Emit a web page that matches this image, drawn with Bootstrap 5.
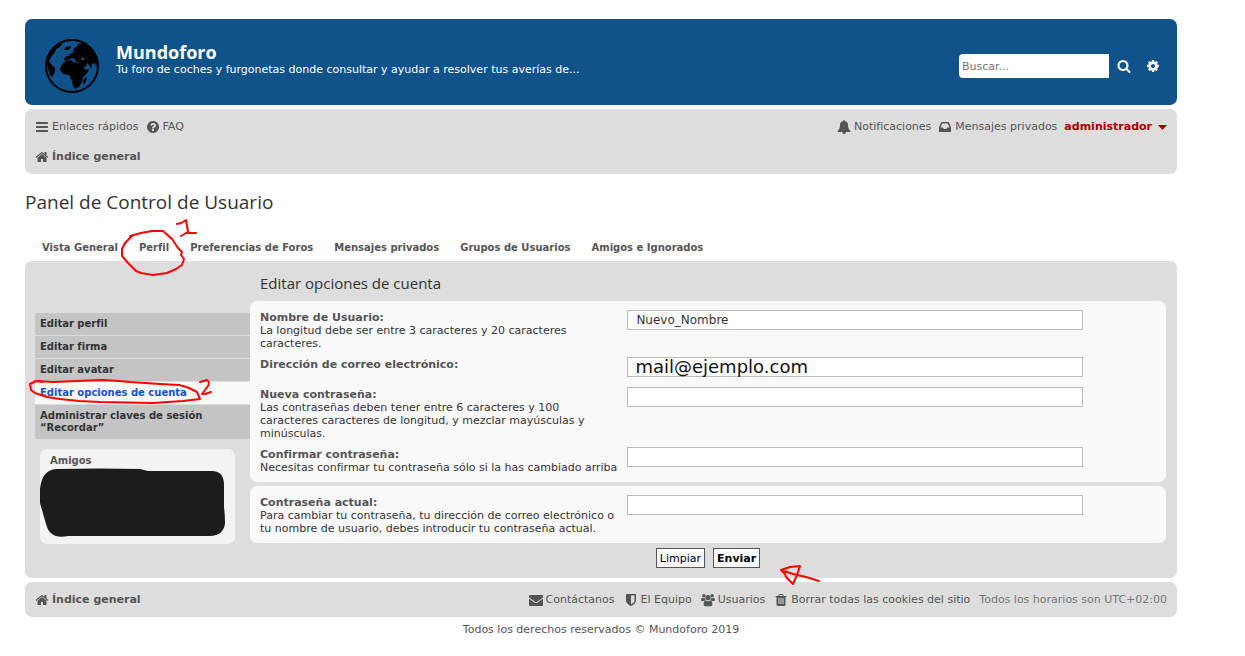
<!DOCTYPE html>
<html lang="es">
<head>
<meta charset="utf-8">
<meta name="viewport" content="width=device-width, initial-scale=1">
<title>Mundoforo - Panel de Control de Usuario</title>
<link href="https://cdn.jsdelivr.net/npm/bootstrap@5.3.0/dist/css/bootstrap.min.css" rel="stylesheet">
<style>
body{font-family:"DejaVu Sans",Verdana,sans-serif;font-size:11px;line-height:13px;color:#333;background:#fff}
.wrap{max-width:1202px;padding:19px 25px 0}
a{color:#555;text-decoration:none}
a:hover{color:#105289}
h1,h2,h3{font-family:"Open Sans","Trebuchet MS",sans-serif;margin:0}
.ic{width:14px;height:14px;fill:currentColor;flex:none}
.headerbar{background:#10528a;color:#fff;border-radius:7px;min-height:86px;padding:0 10px 0 20px;margin-bottom:4px}
.headerbar h1{font-size:18px;line-height:22px;font-weight:700}
.brand{gap:17px}
.globe{width:54px;height:54px;display:block;margin-top:8px}
.greybar{background:#ddd;border-radius:7px;padding:11px 10px 10px;margin-bottom:4px;line-height:14px}
.greybar ul{margin:0}
.greybar a{display:flex;align-items:center;gap:3px}
.nav-links{gap:7px}
.foot-links{gap:9px}
.search-input{width:150px;height:24px;border:0;border-radius:4px 0 0 4px;padding:3px;font-size:11px;color:#333}
.search-input::placeholder{color:#757575}
.icon-btn{border:0;background:none;color:#fff;padding:0;width:29px;height:24px;display:flex;align-items:center;justify-content:center}
.crumb{font-weight:700}
.greybar .user{font-weight:700;color:#a00;gap:6px}
.caret-ic{width:9px;height:5px;fill:currentColor}
.page-title{font-size:19px;line-height:24px;font-weight:400;color:#333;margin:16px 0 27px}
.tabs{padding-left:17px;gap:21px;height:15px;margin-bottom:5px}
.tabs a{font-size:10px;font-weight:700}
.marker{position:absolute;fill:none;stroke:#f00;stroke-width:2;stroke-linecap:round;stroke-linejoin:round;pointer-events:none;z-index:2;overflow:visible}
.mark-tab{left:-18px;top:-24px}
.mark-side{left:-6px;top:-2px}
.mark-send{left:124px;top:18px}
.panel{background:#ddd;border-radius:7px;padding:10px 11px 10px 10px;margin-bottom:4px}
.side{width:215px;flex:none;padding-top:42px}
.side-menu a{display:block;background:#c4c4c4;color:#333;font-size:10px;font-weight:700;line-height:12px;padding:5px;margin-bottom:1px}
.side-menu a.active{background:#f9f9f9;color:#1550d0}
.friends{background:#f3f3f3;border-radius:7px;margin:10px 15px 0 5px;height:95px;padding:6px 10px}
.friends h3{font:700 10px/12px "DejaVu Sans",Verdana,sans-serif;color:#555}
.scribble{left:0;top:20px;fill:#1c1c1c;stroke:none}
.main-title{font-size:15px;line-height:18px;font-weight:400;color:#333;margin:3px 0 9px 10px}
.box{background:#f9f9f9;border-radius:7px;padding:10px 10px 0;margin-bottom:4px}
.frow{display:grid;grid-template-columns:40% 1fr;column-gap:9px;min-height:22px;margin-bottom:8px}
.frow label{font-weight:700;color:#555;display:block}
.frow input{width:100%;max-width:456px;height:20px;border:1px solid #bbb;background:#fff;padding:0 8px;margin-top:-1px;font-size:12px;line-height:18px;color:#333}
.frow input.big-mail{font-size:18px;line-height:20px;color:#111;border:0;box-shadow:inset 0 0 0 1px #bbb}
.actions{padding-top:1px}
.fbtn{height:20px;border:1px solid #555;background:#fafafa;color:#000;font-size:11px;line-height:13px;padding:0 3px}
.copy{color:#555;padding-top:2px}
.tz{color:#777}
</style>
</head>
<body>
<svg class="d-none">
<symbol id="bars" viewBox="0 0 1792 1792"><path d="M1664 1344v128q0 26-19 45t-45 19h-1408q-26 0-45-19t-19-45v-128q0-26 19-45t45-19h1408q26 0 45 19t19 45zm0-512v128q0 26-19 45t-45 19h-1408q-26 0-45-19t-19-45v-128q0-26 19-45t45-19h1408q26 0 45 19t19 45zm0-512v128q0 26-19 45t-45 19h-1408q-26 0-45-19t-19-45v-128q0-26 19-45t45-19h1408q26 0 45 19t19 45z"/></symbol>
<symbol id="home" viewBox="0 0 1792 1792"><path d="M1472 992v480q0 26-19 45t-45 19h-384v-384h-256v384h-384q-26 0-45-19t-19-45v-480q0-1 .5-3t.5-3l575-474 575 474q1 2 1 6zm223-69l-62 74q-8 9-21 11h-3q-13 0-21-7l-692-577-692 577q-12 8-24 7-13-2-21-11l-62-74q-8-10-7-23.500t11-21.500l719-599q32-26 76-26t76 26l244 204v-195q0-14 9-23t23-9h192q14 0 23 9t9 23v408l219 182q10 8 11 21.500t-7 23.500z"/></symbol>
<symbol id="question" viewBox="0 0 1792 1792"><path d="M1024 1376v-192q0-14-9-23t-23-9h-192q-14 0-23 9t-9 23v192q0 14 9 23t23 9h192q14 0 23-9t9-23zm256-672q0-88-55.500-163t-138.500-116-170-41q-243 0-371 213-15 24 8 42l132 100q7 6 19 6 16 0 25-12 53-68 86-92 34-24 86-24 48 0 85.500 26t37.500 59q0 38-20 61t-68 45q-63 28-115.500 86.500t-52.500 125.500v36q0 14 9 23t23 9h192q14 0 23-9t9-23q0-19 21.500-49.500t54.500-49.500q32-18 49-28.500t46-35 44.500-48 28-60.500 12.500-81zm384 192q0 209-103 385.500t-279.500 279.500-385.500 103-385.500-103-279.500-279.500-103-385.500 103-385.500 279.500-279.500 385.500-103 385.500 103 279.500 279.500 103 385.500z"/></symbol>
<symbol id="search" viewBox="0 0 1792 1792"><path d="M1216 832q0-185-131.500-316.500t-316.500-131.500-316.500 131.500-131.500 316.500 131.500 316.500 316.500 131.500 316.500-131.500 131.500-316.500zm512 832q0 52-38 90t-90 38q-54 0-90-38l-343-342q-179 124-399 124-143 0-273.500-55.500t-225-150-150-225-55.500-273.500 55.500-273.500 150-225 225-150 273.500-55.500 273.500 55.500 225 150 150 225 55.500 273.500q0 220-124 399l343 343q37 37 37 90z"/></symbol>
<symbol id="cog" viewBox="0 0 1792 1792"><path d="M1152 896q0-106-75-181t-181-75-181 75-75 181 75 181 181 75 181-75 75-181zm512-109v222q0 12-8 23t-20 13l-185 28q-19 54-39 91 35 50 107 138 10 12 10 25t-9 23q-27 37-99 108t-94 71q-12 0-26-9l-138-108q-44 23-91 38-16 136-29 186-7 28-36 28h-222q-14 0-24.500-8.500t-11.500-21.500l-28-184q-49-16-90-37l-141 107q-10 9-25 9-14 0-25-11-126-114-165-168-7-10-7-23 0-12 8-23 15-21 51-66.500t54-70.500q-27-50-41-99l-183-27q-13-2-21-12.500t-8-23.500v-222q0-12 8-23t19-13l186-28q14-46 39-92-40-57-107-138-10-12-10-24 0-10 9-23 26-36 98.500-107.500t94.500-71.500q13 0 26 10l138 107q44-23 91-38 16-136 29-186 7-28 36-28h222q14 0 24.500 8.500t11.500 21.500l28 184q49 16 90 37l142-107q9-9 24-9 13 0 25 10 129 119 165 170 7 8 7 22 0 12-8 23-15 21-51 66.500t-54 70.500q26 50 41 98l183 28q13 2 21 12.500t8 23.500z"/></symbol>
<symbol id="bell" viewBox="0 0 1792 1792"><path d="M912 1696q0-16-16-16-59 0-101.500-42.500t-42.500-101.500q0-16-16-16t-16 16q0 73 51.500 124.500t124.500 51.500q16 0 16-16zm816-288q0 52-38 90t-90 38h-448q0 106-75 181t-181 75-181-75-75-181h-448q-52 0-90-38t-38-90q50-42 91-88t85-119.500 74.500-158.500 50-206 19.500-260q0-152 117-282.500t307-158.500q-8-19-8-39 0-40 28-68t68-28 68 28 28 68q0 20-8 39 190 28 307 158.500t117 282.500q0 139 19.500 260t50 206 74.500 158.500 85 119.500 91 88z"/></symbol>
<symbol id="inbox" viewBox="0 0 1792 1792"><path d="M1151 960h316q-1-3-2.500-8t-2.500-8l-212-496h-708l-212 496q-1 2-2.500 8t-2.500 8h316l95 192h320zm513 30v482q0 26-19 45t-45 19h-1408q-26 0-45-19t-19-45v-482q0-62 25-123l238-552q10-25 36.500-42t52.500-17h832q26 0 52.500 17t36.500 42l238 552q25 61 25 123z"/></symbol>
<symbol id="mail" viewBox="0 0 1792 1792"><path d="M1792 710v794q0 66-47 113t-113 47h-1472q-66 0-113-47t-47-113v-794q44 49 101 87 362 246 497 345 57 42 92.500 65.500t94.500 48 110 24.500h2q51 0 110-24.500t94.500-48 92.500-65.500q170-123 498-345 57-39 100-87zm0-294q0 79-49 151t-122 123q-376 261-468 325-10 7-42.500 31t-54 38.500-52 32.500-57.500 27-50 9h-2q-23 0-50-9t-57.500-27-52-32.500-54-38.500-42.500-31q-91-64-262-182.500t-205-142.500q-62-42-117-115.500t-55-136.500q0-78 41.500-130t118.500-52h1472q65 0 112.500 47t47.500 113z"/></symbol>
<symbol id="shield" viewBox="0 0 1792 1792"><path d="M1344 960v-640h-448v1137q119-63 213-137 235-184 235-360zm192-768v768q0 86-33.500 170.500t-83 150-118 127.500-126.500 103-121 77.500-89.500 49.500-42.500 20q-12 6-26 6t-26-6q-16-7-42.500-20t-89.500-49.500-121-77.500-126.500-103-118-127.500-83-150-33.500-170.500v-768q0-26 19-45t45-19h1152q26 0 45 19t19 45z"/></symbol>
<symbol id="group" viewBox="0 0 16 14"><circle cx="3.200" cy="2" r="2"/><circle cx="12.800" cy="2" r="2"/><circle cx="8" cy="4.200" r="3"/><path d="M0 7.300Q0 4.300 1.400 4.300Q3 5.400 4.500 4.600Q4.600 6.300 5.400 7.200Q4 7.200 3.300 8H1.300Q0 8 0 7.300zM16 7.300Q16 4.300 14.600 4.300Q13 5.400 11.500 4.600Q11.400 6.300 10.600 7.200Q12 7.200 12.700 8h2Q16 8 16 7.300zM3 12q0-4.300 2.400-4.300q2.600 1.600 5.200 0Q13 7.700 13 12q0 2-2 2H5q-2 0-2-2z"/></symbol>
<symbol id="trash" viewBox="0 0 1792 1792"><path d="M704 1376v-704q0-14-9-23t-23-9h-64q-14 0-23 9t-9 23v704q0 14 9 23t23 9h64q14 0 23-9t9-23zm256 0v-704q0-14-9-23t-23-9h-64q-14 0-23 9t-9 23v704q0 14 9 23t23 9h64q14 0 23-9t9-23zm256 0v-704q0-14-9-23t-23-9h-64q-14 0-23 9t-9 23v704q0 14 9 23t23 9h64q14 0 23-9t9-23zm-544-992h448l-48-117q-7-9-17-11h-317q-10 2-17 11zm928 32v64q0 14-9 23t-23 9h-96v948q0 83-47 143.500t-113 60.500h-832q-66 0-113-58.500t-47-141.500v-952h-96q-14 0-23-9t-9-23v-64q0-14 9-23t23-9h309l70-167q15-37 54-63t79-26h320q40 0 79 26t54 63l70 167h309q14 0 23 9t9 23z"/></symbol>
</svg>
<div class="wrap">
  <header class="headerbar d-flex align-items-center justify-content-between">
    <div class="brand d-flex align-items-center">
      <a href="#" aria-label="Mundoforo">
        <svg class="globe" viewBox="0 0 54 54">
          <circle cx="27" cy="27" r="26" fill="none" stroke="#000" stroke-width="2"/>
          <path d="M18 24l4-2 5-1 1 2 4 1 4-1 3 5 1 3 4-1-1 3-5 5-1 5-3 5-4 2-2-3-1-5-2-4-1-2-6-1-3-4 1-4zM19 21l1-3 3-1 2-2 3-1 1-2 4 0 2 2 3 1 1 3-2 0-1 3 4 0 2 4-2 3-3-3-3-2-3 0-1-3-3-1-2 1-2 1-2 1zM28 12l2-4 2 0 1-3 5-1 7 4 5 7 3 8-2 5-1-4-3 1-1 5-2-4-3-3-3-5-5-3-3 1zM19 11l2-3 5-1 0 2-3 2zM1 22l4-10 6-6 7-3-3 5-4 2-1 3-4 5-2 4 2 3 4 4 0 4-3 5-2-1zM38 42l3-4 1 1-2 5-2 2z"/>
        </svg>
      </a>
      <div class="mb-2">
        <h1>Mundoforo</h1>
        <div>Tu foro de coches y furgonetas donde consultar y ayudar a resolver tus averías de...</div>
      </div>
    </div>
    <form class="d-flex mt-2" role="search" onsubmit="return false">
      <input class="search-input" type="search" placeholder="Buscar..." aria-label="Buscar">
      <button class="icon-btn" aria-label="Buscar"><svg class="ic"><use href="#search"/></svg></button>
      <button class="icon-btn" type="button" aria-label="Búsqueda avanzada"><svg class="ic"><use href="#cog"/></svg></button>
    </form>
  </header>

  <nav class="greybar">
    <div class="d-flex justify-content-between pb-3">
      <ul class="nav-links list-unstyled d-flex">
        <li><a href="#"><svg class="ic"><use href="#bars"/></svg>Enlaces rápidos</a></li>
        <li><a href="#"><svg class="ic"><use href="#question"/></svg>FAQ</a></li>
      </ul>
      <ul class="nav-links list-unstyled d-flex">
        <li><a href="#"><svg class="ic"><use href="#bell"/></svg>Notificaciones</a></li>
        <li><a href="#"><svg class="ic"><use href="#inbox"/></svg>Mensajes privados</a></li>
        <li><a href="#" class="user">administrador<svg class="caret-ic" viewBox="0 0 9 5"><path d="M0 0h9L4.500 5z"/></svg></a></li>
      </ul>
    </div>
    <ul class="list-unstyled"><li><a href="#" class="crumb"><svg class="ic"><use href="#home"/></svg>Índice general</a></li></ul>
  </nav>

  <h2 class="page-title">Panel de Control de Usuario</h2>

  <ul class="tabs list-unstyled d-flex">
    <li><a href="#">Vista General</a></li>
    <li class="position-relative"><a href="#" aria-current="page">Perfil</a>
      <svg class="marker mark-tab" width="80" height="60"><path d="M9 19L20 16L31 14H42L51 22L57 31L61 35L60 38L63 42L61 48L55 52L46 56L32 58L20 56L15 54L8 47L1 39V32L4 26L12 18M56 7L60 6L65 3L67 15M60 19L65 16H75"/></svg>
    </li>
    <li><a href="#">Preferencias de Foros</a></li>
    <li><a href="#">Mensajes privados</a></li>
    <li><a href="#">Grupos de Usuarios</a></li>
    <li><a href="#">Amigos e Ignorados</a></li>
  </ul>

  <main class="panel d-flex">
    <aside class="side">
      <nav class="side-menu">
        <a href="#">Editar perfil</a>
        <a href="#">Editar firma</a>
        <a href="#">Editar avatar</a>
        <div class="position-relative">
          <a href="#" class="active">Editar opciones de cuenta</a>
          <svg class="marker mark-side" width="184" height="25"><path d="M13 2L7 1L1 4L2 10L6 13L18 17L31 19L50 21L71 22L124 23L154 21L171 19L168 12L160 8L154 6L150 5L131 4L101 2L90 1L74 0L48 1L24 2L8 1M171 2L178 0Q181 2 179 6L173 14H176L182 12"/></svg>
        </div>
        <a href="#">Administrar claves de sesión<br>“Recordar”</a>
      </nav>
      <section class="friends position-relative">
        <h3>Amigos</h3>
        <svg class="marker scribble" width="186" height="68"><path d="M16 0Q60-1 100 0L108 2H172Q184 2 184 16V38Q185 45 185 54Q184 66 171 67H28Q10 71 6 55L4 48L0 34V20Q2 1 16 0z"/></svg>
      </section>
    </aside>
    <form class="flex-grow-1" onsubmit="return false">
      <h2 class="main-title">Editar opciones de cuenta</h2>
      <div class="box">
        <div class="frow"><div><label for="user">Nombre de Usuario:</label>La longitud debe ser entre 3 caracteres y 20 caracteres caracteres.</div><div><input id="user" type="text" value="Nuevo_Nombre"></div></div>
        <div class="frow"><div><label for="email">Dirección de correo electrónico:</label></div><div><input id="email" class="big-mail" type="text" value="mail@ejemplo.com"></div></div>
        <div class="frow"><div><label for="newpw">Nueva contraseña:</label>Las contraseñas deben tener entre 6 caracteres y 100 caracteres caracteres de longitud, y mezclar mayúsculas y minúsculas.</div><div><input id="newpw" type="password"></div></div>
        <div class="frow mb-0 pb-2"><div><label for="confpw">Confirmar contraseña:</label>Necesitas confirmar tu contraseña sólo si la has cambiado arriba</div><div><input id="confpw" type="password"></div></div>
      </div>
      <div class="box">
        <div class="frow mb-0 pb-2"><div><label for="curpw">Contraseña actual:</label>Para cambiar tu contraseña, tu dirección de correo electrónico o tu nombre de usuario, debes introducir tu contraseña actual.</div><div><input id="curpw" type="password"></div></div>
      </div>
      <div class="actions d-flex justify-content-center">
        <div class="d-flex gap-2 position-relative">
          <button type="reset" class="fbtn">Limpiar</button>
          <button class="fbtn fw-bold">Enviar</button>
          <svg class="marker mark-send" width="42" height="20"><path d="M39 15L26 11L13 8L1 4L10 1L20 0L17 9L13 18L6 11L5 8L1 4"/></svg>
        </div>
      </div>
    </form>
  </main>

  <footer>
    <div class="greybar d-flex justify-content-between">
      <ul class="list-unstyled"><li><a href="#" class="crumb"><svg class="ic"><use href="#home"/></svg>Índice general</a></li></ul>
      <ul class="foot-links list-unstyled d-flex">
        <li><a href="#"><svg class="ic"><use href="#mail"/></svg>Contáctanos</a></li>
        <li><a href="#"><svg class="ic"><use href="#shield"/></svg>El Equipo</a></li>
        <li><a href="#"><svg class="ic"><use href="#group"/></svg>Usuarios</a></li>
        <li><a href="#"><svg class="ic"><use href="#trash"/></svg>Borrar todas las cookies del sitio</a></li>
        <li class="tz">Todos los horarios son UTC+02:00</li>
      </ul>
    </div>
    <p class="copy text-center mb-0">Todos los derechos reservados © Mundoforo 2019</p>
  </footer>
</div>
<script src="https://cdn.jsdelivr.net/npm/bootstrap@5.3.0/dist/js/bootstrap.bundle.min.js"></script>
</body>
</html>
